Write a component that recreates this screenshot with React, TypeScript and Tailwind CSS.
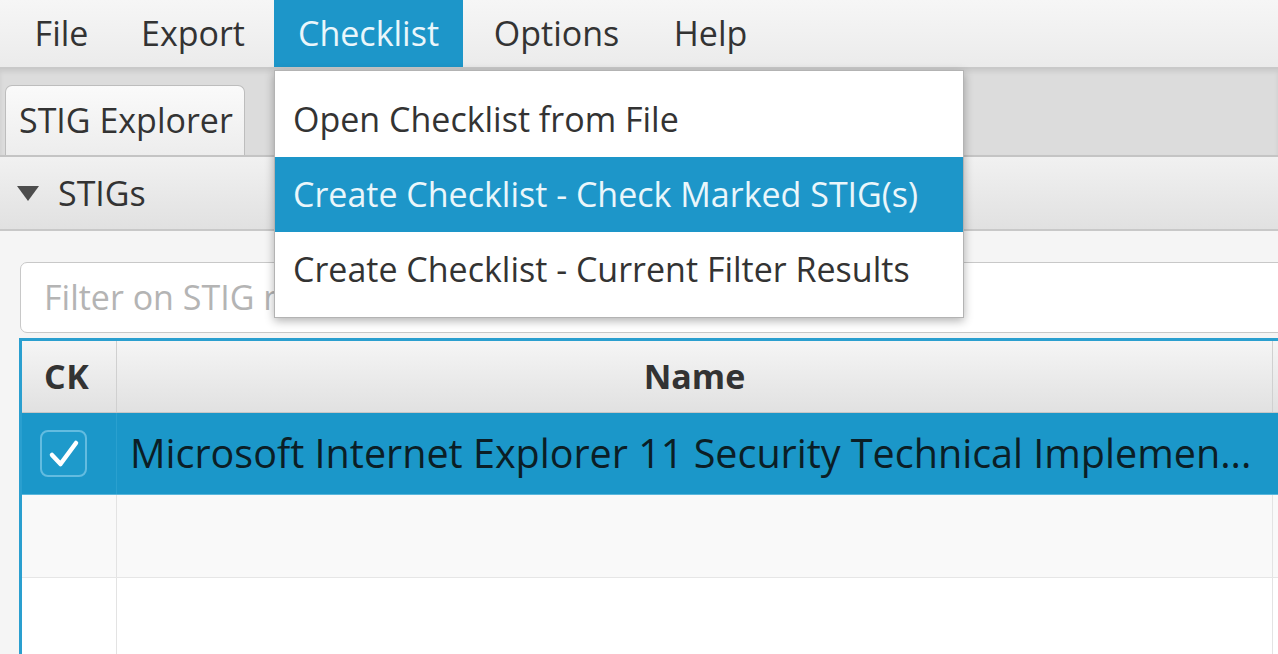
import React from 'react';

const menus = [
  { label: 'File', w: 'w-[101px]' },
  { label: 'Export', w: 'w-[162px]' },
  { label: 'Checklist', w: 'w-[189px]', active: true },
  { label: 'Options', w: 'w-[187px]' },
  { label: 'Help', w: 'w-[121px]' },
];

const checklistItems = [
  { label: 'Open Checklist from File' },
  { label: 'Create Checklist - Check Marked STIG(s)', active: true },
  { label: 'Create Checklist - Current Filter Results' },
];

const CheckBox: React.FC = () => (
  <div className="w-[47px] h-[47px] rounded-[8px] border-2 border-[#63bce0] bg-[#1e9acb] flex items-center justify-center">
    <svg width="32" height="30" viewBox="0 0 32 30" fill="none">
      <path d="M4 16 L12.5 25 L28 4" stroke="white" strokeWidth="4.5" strokeLinecap="round" strokeLinejoin="round" />
    </svg>
  </div>
);

const App: React.FC = () => {
  return (
    <div
      className="relative w-[1278px] h-[654px] overflow-hidden bg-[#f4f4f4] text-[34px] text-[#333333]"
      style={{ fontFamily: '"Open Sans", "Noto Sans", sans-serif' }}
    >
      {/* menu bar */}
      <div className="h-[69px] flex pl-[11px] bg-gradient-to-b from-[#f6f6f6] to-[#ebebeb] border-b-2 border-[#c9c9c9]">
        {menus.map((m) => (
          <div
            key={m.label}
            className={`${m.w} h-full flex items-center justify-center ${m.active ? 'bg-[#1d96c9] text-[#eaf6fb]' : ''}`}
          >
            {m.label}
          </div>
        ))}
      </div>

      {/* tab header */}
      <div className="h-[88px] bg-[#dcdcdc] border-b-2 border-[#c4c4c4] flex items-end pl-[5px] shadow-[inset_0_3px_4px_rgba(0,0,0,0.08)]">
        <div className="w-[240px] h-[70px] rounded-t-[7px] border border-b-0 border-[#bdbdbd] bg-gradient-to-b from-[#fafafa] to-[#ededed] flex items-center pl-[13px]">
          STIG Explorer
        </div>
      </div>

      {/* titled pane header */}
      <div className="h-[74px] flex items-center bg-gradient-to-b from-[#f1f1f1] to-[#e1e1e1] border-b-2 border-[#c8c8c8]">
        <svg width="22" height="15" viewBox="0 0 22 15" className="ml-[17px] mr-[19px]">
          <path d="M0 0 H22 L11 15 Z" fill="#4d4d4d" />
        </svg>
        <span>STIGs</span>
      </div>

      {/* content */}
      <div className="pt-[31px] pl-[20px] bg-[#f5f5f5]">
        <div className="h-[71px] w-[1290px] rounded-[7px] border border-[#c8c8c8] bg-white flex items-center pl-[23px] text-[#b4b4b4]">
          Filter on STIG name
        </div>

        <div className="mt-[5px] -ml-[1px] border-t-[3px] border-l-[3px] border-[#2a9fcf] bg-white">
          <div className="h-[72px] flex bg-gradient-to-b from-[#f5f5f5] to-[#e1e1e1] border-b border-[#c7c7c7] font-bold">
            <div className="w-[95px] flex items-center pl-[22px] border-r border-[#d0d0d0] text-[#333] tracking-[0.5px]">CK</div>
            <div className="w-[1156px] flex items-center justify-center border-r border-[#d0d0d0] text-[#333]">Name</div>
          </div>

          <div className="h-[82px] flex bg-[#1b97c9] border-b border-[#5ab7dc]">
            <div className="w-[95px] flex items-center pl-[18px] border-r border-[#2aa0cf]">
              <CheckBox />
            </div>
            <div className="w-[1156px] flex items-center pl-[13px] text-[39.5px] text-[#0b1e26] whitespace-nowrap overflow-hidden">
              Microsoft Internet Explorer 11 Security Technical Implemen...
            </div>
          </div>

          <div className="h-[83px] flex bg-[#f9f9f9] border-b border-[#e6e6e6]">
            <div className="w-[95px] border-r border-[#e3e3e3]" />
            <div className="w-[1156px] border-r border-[#e3e3e3]" />
          </div>

          <div className="h-[83px] flex bg-white">
            <div className="w-[95px] border-r border-[#e3e3e3]" />
            <div className="w-[1156px] border-r border-[#e3e3e3]" />
          </div>
        </div>
      </div>

      {/* checklist dropdown */}
      <div className="absolute left-[274px] top-[70px] w-[690px] border border-[#b3b3b3] bg-white pt-[11px] pb-[10px] shadow-[0_3px_9px_rgba(0,0,0,0.3)]">
        {checklistItems.map((it) => (
          <div
            key={it.label}
            className={`h-[75px] flex items-center pl-[18px] whitespace-nowrap ${it.active ? 'bg-[#1d96c9] text-[#eaf6fb]' : 'text-[#333]'}`}
          >
            {it.label}
          </div>
        ))}
      </div>
    </div>
  );
};

export default App;
